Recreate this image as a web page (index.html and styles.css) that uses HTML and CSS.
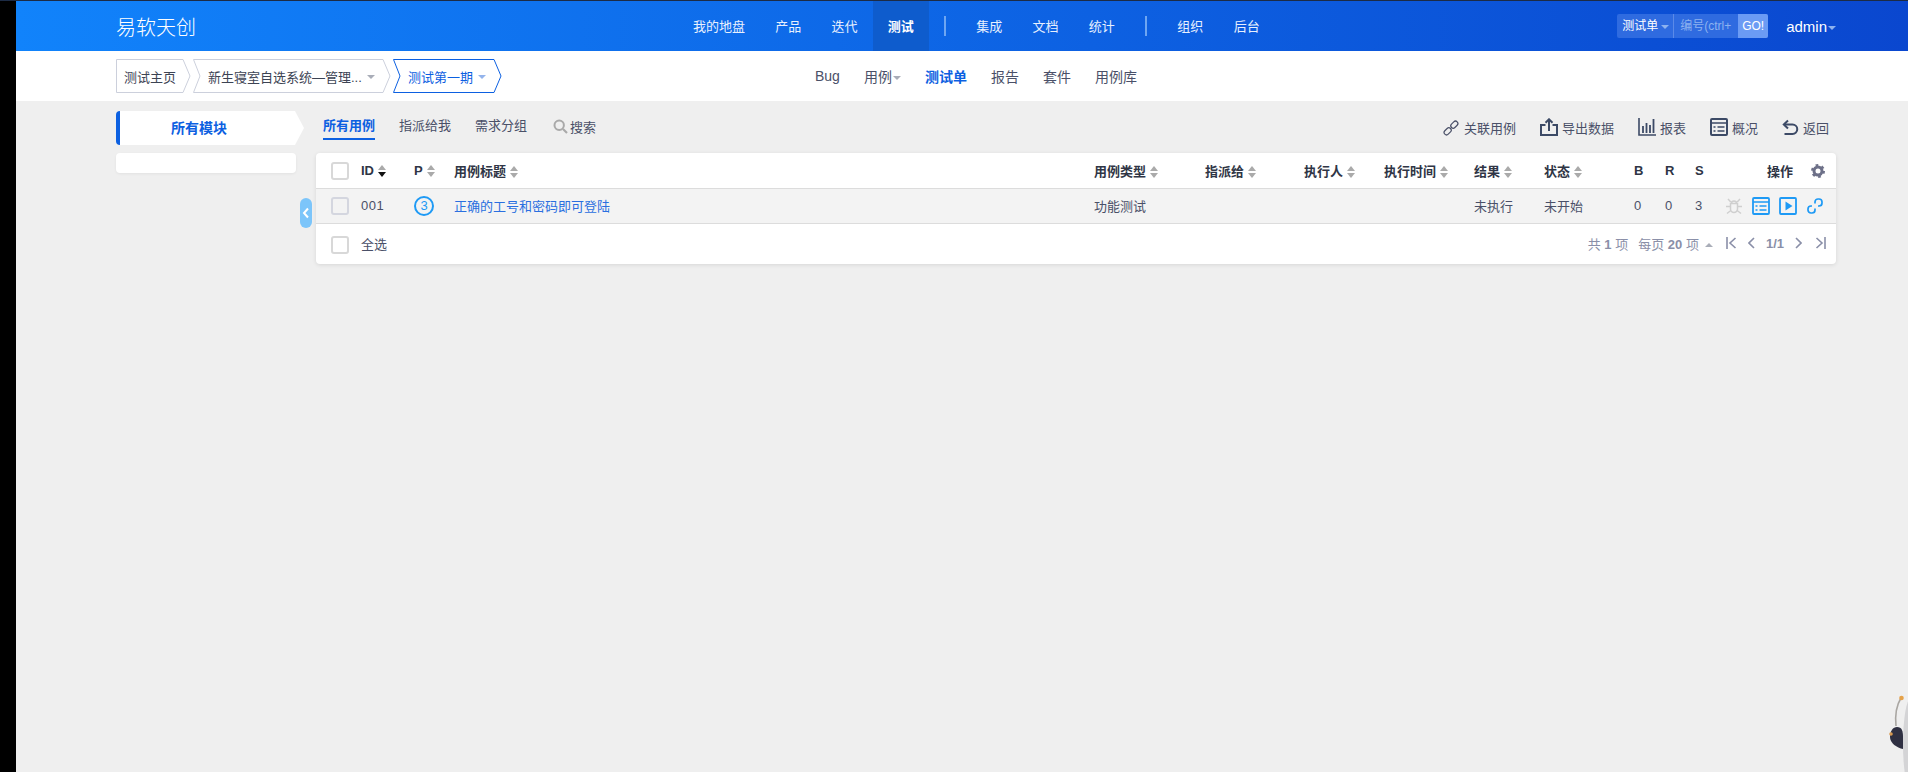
FILE: index.html
```html
<!DOCTYPE html>
<html lang="zh-CN">
<head>
    <meta charset="UTF-8">
    <meta name="viewport" content="width=device-width, initial-scale=1.0">
    <title>测试单 - 易软天创</title>
    <link rel="stylesheet" href="styles.css">
</head>
<body>
    <div class="strip"></div>
    <div class="app">
        <header class="topbar">
            <div class="brand">易软天创</div>
            <nav class="mainnav">
                <a>我的地盘</a>
                <a>产品</a>
                <a>迭代</a>
                <a class="active">测试</a>
                <span class="navsep"></span>
                <a>集成</a>
                <a>文档</a>
                <a>统计</a>
                <span class="navsep"></span>
                <a>组织</a>
                <a>后台</a>
            </nav>
            <div class="quick">
                <div class="quick-type">测试单<i class="caret caret-light"></i></div>
                <div class="quick-input">编号(ctrl+</div>
                <div class="quick-go">GO!</div>
            </div>
            <div class="user">admin<i class="caret caret-light"></i></div>
        </header>

        <section class="subbar">
            <div class="crumbs">
                <div class="crumb crumb-home">
                    <svg class="crumb-bg" width="75" height="34"><polygon points="0.5,0.5 67,0.5 74,17 67,33.5 0.5,33.5"/></svg>
                    <span>测试主页</span>
                </div>
                <div class="crumb crumb-product">
                    <svg class="crumb-bg" width="198" height="34"><polygon points="0.5,0.5 190,0.5 197,17 190,33.5 0.5,33.5 7,17"/></svg>
                    <span>新生寝室自选系统—管理...</span><i class="caret"></i>
                </div>
                <div class="crumb crumb-current">
                    <svg class="crumb-bg" width="109" height="34"><polygon points="0.5,0.5 101,0.5 108,17 101,33.5 0.5,33.5 7,17"/></svg>
                    <span>测试第一期</span><i class="caret"></i>
                </div>
            </div>
            <nav class="subnav">
                <a>Bug</a>
                <a>用例<i class="caret"></i></a>
                <a class="active">测试单</a>
                <a>报告</a>
                <a>套件</a>
                <a>用例库</a>
            </nav>
        </section>

        <main class="main">
            <aside class="sidebar">
                <div class="side-head">所有模块</div>
                <div class="side-box"></div>
            </aside>
            <button class="side-toggle">
                <svg width="8" height="12" viewBox="0 0 8 12"><path d="M6 1.5 2 6l4 4.5" fill="none" stroke="#fff" stroke-width="2"/></svg>
            </button>

            <div class="content">
                <div class="toolbar">
                    <div class="tabs">
                        <a class="tab active">所有用例</a>
                        <a class="tab">指派给我</a>
                        <a class="tab">需求分组</a>
                        <a class="tab tab-search">
                            <svg width="15" height="15" viewBox="0 0 15 15"><circle cx="6.2" cy="6.2" r="4.7" fill="none" stroke="#a9a9a9" stroke-width="2"/><path d="M10 10l4 4" stroke="#a9a9a9" stroke-width="2.2"/></svg>
                            搜索
                        </a>
                    </div>
                    <div class="actions">
                        <a class="act">
                            <svg width="17" height="17" viewBox="0 0 17 17" fill="none" stroke="#4a5068" stroke-width="1.2"><rect x="-5.6" y="-2.4" width="8" height="4.8" rx="2.4" transform="translate(5.8 11.2) rotate(-45)"/><rect x="-2.4" y="-2.4" width="8" height="4.8" rx="2.4" transform="translate(10.2 6.8) rotate(-45)"/></svg>
                            关联用例
                        </a>
                        <a class="act">
                            <svg width="18" height="18" viewBox="0 0 18 18" fill="none" stroke="#3c4a66" stroke-width="2"><path d="M5.500 7H1v10h16V7h-4.500"/><path d="M9 13V1.500M5.500 4.800 9 1.300l3.500 3.500"/></svg>
                            导出数据
                        </a>
                        <a class="act">
                            <svg width="18" height="18" viewBox="0 0 18 18" fill="none" stroke="#3c4a66"><path d="M1 0v17h17" stroke-width="1.600"/><path d="M5 15V8M8.500 15V5M12 15V7M15.500 15V1" stroke-width="1.800"/></svg>
                            报表
                        </a>
                        <a class="act">
                            <svg width="18" height="18" viewBox="0 0 18 18" fill="none" stroke="#3c4a66" stroke-width="2"><rect x="1" y="1" width="16" height="16" rx="1"/><path d="M1 5h16M3.500 9h2M7.500 9h7M3.500 13h2M7.500 13h7" stroke-width="1.600"/></svg>
                            概况
                        </a>
                        <a class="act">
                            <svg width="17" height="17" viewBox="0 0 17 17" fill="none" stroke="#3c4a66" stroke-width="2"><path d="M6 1.500 1.800 5.500 6 9.500"/><path d="M2 5.500h8.500a4.500 4.500 0 0 1 0 9.500H2.500"/></svg>
                            返回
                        </a>
                    </div>
                </div>

                <div class="panel">
                    <table class="cases">
                        <colgroup>
                            <col class="c-check"><col class="c-id"><col class="c-pri"><col class="c-title"><col class="c-type"><col class="c-assign"><col class="c-runner"><col class="c-time"><col class="c-result"><col class="c-status"><col class="c-b"><col class="c-r"><col class="c-s"><col class="c-ops">
                        </colgroup>
                        <thead>
                            <tr>
                                <th class="cell-check"><span class="check"></span></th>
                                <th>ID<i class="sort sort-down"></i></th>
                                <th>P<i class="sort"></i></th>
                                <th>用例标题<i class="sort"></i></th>
                                <th>用例类型<i class="sort"></i></th>
                                <th>指派给<i class="sort"></i></th>
                                <th>执行人<i class="sort"></i></th>
                                <th>执行时间<i class="sort"></i></th>
                                <th>结果<i class="sort"></i></th>
                                <th>状态<i class="sort"></i></th>
                                <th>B</th>
                                <th>R</th>
                                <th>S</th>
                                <th class="cell-ops">
                                    <span>操作</span>
                                    <svg class="gear" width="14" height="14" viewBox="0 0 14 14" fill="none" stroke="#6d7088"><circle cx="7" cy="7" r="4" stroke-width="3"/><circle cx="7" cy="7" r="6" stroke-width="2" stroke-dasharray="2.700 3.580"/></svg>
                                </th>
                            </tr>
                        </thead>
                        <tbody>
                            <tr class="row">
                                <td class="cell-check"><span class="check check-row"></span></td>
                                <td class="num">001</td>
                                <td class="cell-icons"><span class="pri">3</span></td>
                                <td><a class="case-link">正确的工号和密码即可登陆</a></td>
                                <td>功能测试</td>
                                <td></td>
                                <td></td>
                                <td></td>
                                <td>未执行</td>
                                <td>未开始</td>
                                <td>0</td>
                                <td>0</td>
                                <td>3</td>
                                <td class="cell-icons">
                                    <div class="ops">
                                        <svg width="18" height="18" viewBox="0 0 18 18" fill="none" stroke="#cfcfcf" stroke-width="1.500"><path d="M5.500 6.500h7V12a3.500 3.500 0 0 1-7 0z"/><path d="M6.500 6.500a2.500 2.500 0 0 1 5 0M3 2l2.800 3M15 2l-2.800 3M1 9.500h4.500M17 9.500h-4.500M2 16.500l3.800-3M16 16.500l-3.800-3"/></svg>
                                        <svg width="18" height="18" viewBox="0 0 18 18" fill="none" stroke="#1e9af5" stroke-width="1.800"><rect x="1" y="1" width="16" height="16" rx="1"/><path d="M1 5h16M3.500 9h2M7.500 9h7M3.500 13h2M7.500 13h7" stroke-width="1.600"/></svg>
                                        <svg width="18" height="18" viewBox="0 0 18 18" fill="none" stroke="#1e9af5" stroke-width="1.800"><rect x="1" y="1" width="16" height="16" rx="1"/><path d="M6.500 4.500v9l7-4.500z" fill="#1e9af5" stroke="none"/></svg>
                                        <svg width="18" height="18" viewBox="0 0 18 18" fill="none" stroke="#1e9af5" stroke-width="1.700"><path d="M9 6.500V5a3 3 0 0 1 3-3h1a3 3 0 0 1 3 3v1a3 3 0 0 1-3 3h-1"/><path d="M9 11.500V13a3 3 0 0 1-3 3H5a3 3 0 0 1-3-3v-1a3 3 0 0 1 3-3h1"/></svg>
                                    </div>
                                </td>
                            </tr>
                        </tbody>
                    </table>
                    <div class="table-foot">
                        <label class="select-all"><span class="check"></span>全选</label>
                        <div class="pager">
                            <span>共 <b>1</b> 项</span>
                            <span class="per-page">每页 <b>20</b> 项<i class="caret-up"></i></span>
                            <svg class="pg-first" width="11" height="12" viewBox="0 0 11 12" fill="none" stroke="#8a8fa8" stroke-width="1.600"><path d="M1 0v12M9.500 1 4 6l5.500 5"/></svg>
                            <svg class="pg-prev" width="7" height="12" viewBox="0 0 7 12" fill="none" stroke="#8a8fa8" stroke-width="1.600"><path d="M6 1 1 6l5 5"/></svg>
                            <b class="pg-num">1/1</b>
                            <svg class="pg-next" width="7" height="12" viewBox="0 0 7 12" fill="none" stroke="#8a8fa8" stroke-width="1.600"><path d="M1 1l5 5-5 5"/></svg>
                            <svg class="pg-last" width="11" height="12" viewBox="0 0 11 12" fill="none" stroke="#8a8fa8" stroke-width="1.600"><path d="M10 0v12M1.500 1 7 6l-5.500 5"/></svg>
                        </div>
                    </div>
                </div>
            </div>
        </main>
    </div>

    <svg class="mascot" width="19" height="78" viewBox="0 0 19 78">
        <ellipse cx="22" cy="50" rx="8" ry="46" fill="#d4d4d6"/>
        <path d="M12 4C7 12 6 22 7 32" fill="none" stroke="#a9a6a2" stroke-width="1.600"/>
        <circle cx="12.500" cy="4" r="2.300" fill="#e5a24a"/>
        <path d="M8 33c5 0 6 4 6 10 0 7 0 12 0 12C8 54 1 49 1 43 1 37 4 33 8 33z" fill="#2f3042"/>
        <circle cx="2" cy="40" r="1.800" fill="#d79a52"/>
    </svg>
</body>
</html>
```

FILE: styles.css
```css
/* Reset default styles */
* {
    margin: 0;
    padding: 0;
    box-sizing: border-box;
}

html,
body {
    height: 772px;
    overflow: hidden;
}

body {
    display: flex;
    font-family: "Liberation Sans", "Noto Sans CJK SC", sans-serif;
    font-size: 13px;
    color: #3c4353;
    background-color: #efefef;
    border-top: 1px solid #1c2b45;
}

a {
    color: inherit;
    text-decoration: none;
}

i {
    font-style: normal;
}

.strip {
    width: 16px;
    margin-top: -1px;
    background-color: #000;
}

.app {
    flex: 1;
    min-width: 0;
}

/* top bar */
.topbar {
    display: flex;
    align-items: center;
    height: 50px;
    padding: 0 72px 0 100px;
    color: #fff;
    background: linear-gradient(90deg, #1183fb, #0a47cf);
}

.brand {
    width: 562px;
    font-size: 20px;
    font-weight: 300;
    margin-top: 1px;
}

.mainnav {
    display: flex;
    align-items: center;
    height: 100%;
    gap: 0.25px;
}

.mainnav a {
    display: flex;
    align-items: center;
    height: 100%;
    padding: 0 15px;
    margin-top: -1px;
    color: #e8f0fe;
}

.mainnav a.active {
    font-weight: bold;
    color: #fff;
    background-color: #0e5ccd;
}

.navsep {
    width: 2px;
    height: 20px;
    margin: 0 15px;
    background-color: #6ea6f2;
}

.quick {
    display: flex;
    height: 24px;
    margin-left: auto;
    line-height: 24px;
    font-size: 12px;
    border-radius: 2px;
    background-color: #2f6be0;
}

.quick-type {
    width: 57px;
    padding-left: 5px;
    border-right: 1px solid #5b8ae8;
    white-space: nowrap;
}

.quick-input {
    width: 64px;
    padding-left: 6px;
    color: #8db2ef;
    white-space: nowrap;
    overflow: hidden;
}

.quick-go {
    width: 30px;
    text-align: center;
    font-weight: 400;
    border-radius: 0 2px 2px 0;
    background-color: #6b9bf4;
}

.user {
    margin-left: 18px;
    font-size: 15px;
    white-space: nowrap;
}

.caret {
    display: inline-block;
    margin-left: 3px;
    vertical-align: middle;
    border-top: 4px solid #a9adb8;
    border-left: 4px solid transparent;
    border-right: 4px solid transparent;
}

.caret-light {
    border-top-color: #8db2ef;
}

.user .caret {
    margin-left: 1px;
}

/* second bar */
.subbar {
    display: flex;
    align-items: center;
    height: 50px;
    padding-left: 100px;
    background-color: #fff;
}

.crumbs {
    display: flex;
    gap: 2px;
    width: 386px;
}

.crumb {
    position: relative;
    display: flex;
    align-items: center;
    height: 34px;
    white-space: nowrap;
}

.crumb span {
    position: relative;
}

.crumb .caret {
    position: relative;
    margin-left: 5px;
    margin-top: 1px;
}

.crumb-bg {
    position: absolute;
    top: 0;
    left: 0;
}

.crumb-bg polygon {
    fill: #fff;
    stroke: #ccd0dc;
}

.crumb-home {
    width: 75px;
    padding-left: 8px;
}

.crumb-product {
    width: 198px;
    padding-left: 15px;
}

.crumb-current {
    width: 109px;
    padding-left: 15px;
    color: #0c60e1;
}

.crumb-current .crumb-bg polygon {
    stroke: #0c60e1;
}

.crumb-current .caret {
    border-top-color: #94b4ec;
}

.subnav {
    display: flex;
    align-items: center;
    gap: 24px;
    margin-left: 313px;
    font-size: 14px;
}

.subnav a {
    color: #4a5068;
    white-space: nowrap;
}

.subnav a.active {
    font-weight: bold;
    color: #0c60e1;
}

.subnav .caret {
    margin-left: 1px;
}

/* page body */
.main {
    position: relative;
    display: flex;
    gap: 20px;
    padding: 10px 72px 0 100px;
}

.sidebar {
    flex: none;
    width: 180px;
}

.side-head {
    width: 188px;
    height: 34px;
    margin-bottom: 8px;
    padding-right: 26px;
    line-height: 34px;
    text-align: center;
    font-size: 14px;
    font-weight: bold;
    color: #0c60e1;
    background-color: #fff;
    border-left: 4px solid #0c60e1;
    border-radius: 4px 0 0 4px;
    clip-path: polygon(0 0, 179px 0, 188px 17px, 179px 34px, 0 34px);
}

.side-box {
    height: 20px;
    background-color: #fff;
    border-radius: 4px;
    box-shadow: 0 1px 3px rgba(0, 0, 0, 0.06);
}

.side-toggle {
    position: absolute;
    left: 284px;
    top: 97px;
    display: flex;
    align-items: center;
    justify-content: center;
    width: 12px;
    height: 30px;
    border: none;
    border-radius: 6px;
    background-color: #7cc5fa;
}

.content {
    flex: 1;
    min-width: 0;
}

.toolbar {
    display: flex;
    justify-content: space-between;
    height: 32px;
    margin-bottom: 10px;
}

.tabs {
    display: flex;
    align-items: flex-start;
    gap: 24px;
    padding-left: 7px;
}

.tab {
    display: flex;
    align-items: center;
    height: 29px;
    color: #4a5068;
    border-bottom: 2px solid transparent;
    white-space: nowrap;
}

.tab.active {
    font-weight: bold;
    color: #0c60e1;
    border-bottom-color: #0c60e1;
}

.tab-search {
    gap: 2px;
    margin-left: 2px;
    padding-top: 3px;
}

.actions {
    display: flex;
    align-items: center;
    gap: 24px;
    padding: 0 7px 0 0;
    height: 32px;
}

.act {
    display: flex;
    align-items: center;
    gap: 4px;
    color: #4a5068;
    white-space: nowrap;
}

/* case table */
.panel {
    background-color: #fff;
    border-radius: 4px;
    box-shadow: 0 1px 4px rgba(0, 0, 0, 0.1);
}

.cases {
    width: 1520px;
    table-layout: fixed;
    border-collapse: separate;
    border-spacing: 0;
}

.c-check { width: 45px; }
.c-id { width: 53px; }
.c-pri { width: 40px; }
.c-title { width: 640px; }
.c-type { width: 111px; }
.c-assign { width: 99px; }
.c-runner { width: 80px; }
.c-time { width: 90px; }
.c-result { width: 70px; }
.c-status { width: 90px; }
.c-b { width: 31px; }
.c-r { width: 30px; }
.c-s { width: 30px; }
.c-ops { width: 111px; }

.cases th {
    height: 36px;
    text-align: left;
    font-weight: bold;
    color: #2f3545;
    white-space: nowrap;
    border-bottom: 1px solid #dcdcdc;
}

.cases td {
    height: 35px;
    padding-bottom: 2px;
    color: #4a5068;
    white-space: nowrap;
    background-color: #f3f3f3;
    border-bottom: 1px solid #dcdcdc;
}

.cases td.cell-icons {
    padding-bottom: 0;
}

.cell-check {
    padding-left: 15px;
    line-height: 0;
}

.cases td.cell-check {
    padding-bottom: 0;
}

.cell-ops {
    padding-left: 42px;
}

.gear {
    margin-left: 14px;
    vertical-align: -2px;
}

.check {
    display: inline-block;
    width: 18px;
    height: 18px;
    background-color: #fff;
    border: 2px solid #d8d8d8;
    border-radius: 3px;
}

.check-row {
    background-color: #f3f3f3;
    border-color: #d4d6df;
}

.sort {
    position: relative;
    display: inline-block;
    width: 9px;
    height: 12px;
    margin-left: 4px;
    vertical-align: -2px;
}

.sort::before,
.sort::after {
    content: "";
    position: absolute;
    left: 0;
    border-left: 4.5px solid transparent;
    border-right: 4.5px solid transparent;
}

.sort::before {
    top: 0;
    border-bottom: 5.5px solid #aaa;
}

.sort::after {
    bottom: 0;
    border-top: 5.5px solid #aaa;
}

.sort-down::after {
    border-top-color: #111;
}

.num {
    letter-spacing: 0.5px;
}

.pri {
    display: inline-block;
    width: 20px;
    height: 20px;
    line-height: 16px;
    text-align: center;
    color: #1e9af5;
    border: 2px solid #1e9af5;
    border-radius: 50%;
}

.case-link {
    color: #2a6fe0;
}

.ops {
    display: flex;
    gap: 9px;
    align-items: center;
}

.table-foot {
    display: flex;
    align-items: center;
    justify-content: space-between;
    height: 40px;
    padding: 0 10px 2px 15px;
}

.select-all {
    display: flex;
    align-items: center;
    gap: 12px;
    color: #4a5068;
}

.select-all .check {
    margin-top: 4px;
}

.pager {
    display: flex;
    align-items: center;
    color: #8a8fa8;
    white-space: nowrap;
}

.per-page {
    margin-left: 10px;
}

.caret-up {
    display: inline-block;
    margin-left: 6px;
    vertical-align: 2px;
    border-bottom: 4px solid #a9adb8;
    border-left: 4px solid transparent;
    border-right: 4px solid transparent;
}

.pg-first {
    margin-left: 13px;
}

.pg-prev {
    margin-left: 11px;
}

.pg-num {
    margin-left: 11px;
}

.pg-next {
    margin-left: 11px;
}

.pg-last {
    margin-left: 13px;
}

.mascot {
    position: fixed;
    right: 0;
    bottom: 0;
}
```
